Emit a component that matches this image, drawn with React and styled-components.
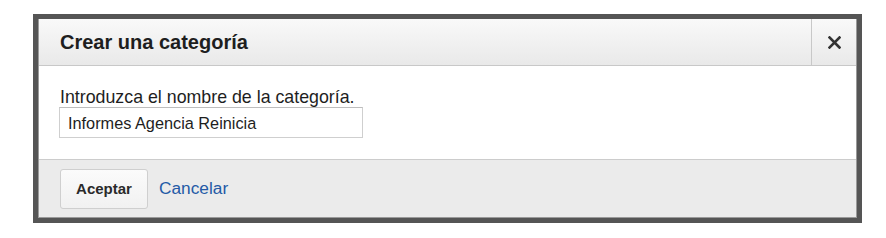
import React from "react";
import styled, { createGlobalStyle } from "styled-components";

const Global = createGlobalStyle`
  html, body { margin: 0; padding: 0; background: #ffffff; }
  body { font-family: "Liberation Sans", Arial, sans-serif; }
`;

const Page = styled.div`
  width: 886px;
  height: 238px;
  padding: 14px 24px 0 33px;
  box-sizing: border-box;
`;

const Dialog = styled.div`
  width: 829px;
  height: 209px;
  box-sizing: border-box;
  border: 5px solid #555555;
  box-shadow: inset 0 0 0 1px #9a9a9a;
  display: flex;
  flex-direction: column;
  background: #ffffff;
`;

const Header = styled.div`
  display: flex;
  height: 47px;
  box-sizing: border-box;
  border-bottom: 1px solid #c8c8c8;
  background: linear-gradient(#f9f9f9, #e9e9e9);
  margin: 0 1px;
`;

const Title = styled.h1`
  flex: 1;
  margin: 0;
  padding-left: 21px;
  display: flex;
  align-items: center;
  font-size: 20px;
  font-weight: bold;
  color: #1e1e1e;
`;

const CloseButton = styled.button`
  width: 45px;
  border: none;
  border-left: 1px solid #c8c8c8;
  background: transparent;
  display: flex;
  align-items: center;
  justify-content: center;
  padding: 0;
  cursor: pointer;
`;

const Body = styled.div`
  flex: 1;
  padding: 22px 22px 0;
  display: flex;
  flex-direction: column;
  align-items: flex-start;
`;

const Label = styled.label`
  font-size: 17.8px;
  color: #1e1e1e;
  line-height: 19px;
`;

const TextInput = styled.input`
  width: 304px;
  height: 31px;
  box-sizing: border-box;
  border: 1px solid #cfcfcf;
  border-top-color: #bdbdbd;
  padding: 1px 8px 0;
  margin-left: -1px;
  font-family: "Liberation Sans", Arial, sans-serif;
  font-size: 16.3px;
  color: #1e1e1e;
  outline: none;
`;

const Footer = styled.div`
  height: 58px;
  box-sizing: border-box;
  border-top: 1px solid #cccccc;
  background: #ebebeb;
  margin: 0 1px 1px;
  display: flex;
  align-items: center;
  padding-left: 21px;
  gap: 11px;
`;

const PrimaryButton = styled.button`
  height: 40px;
  width: 88px;
  box-sizing: border-box;
  border: 1px solid #cfcfcf;
  border-radius: 3px;
  background: linear-gradient(#fbfbfb, #f1f1f1);
  font-family: "Liberation Sans", Arial, sans-serif;
  font-size: 15px;
  font-weight: bold;
  color: #2a2a2a;
  padding: 0;
`;

const LinkButton = styled.a`
  font-size: 17.3px;
  color: #245aa6;
  text-decoration: none;
  cursor: pointer;
  margin-top: -1px;
`;

export default function App() {
  return (
    <>
      <Global />
      <Page>
        <Dialog>
          <Header>
            <Title>Crear una categoría</Title>
            <CloseButton aria-label="Cerrar">
              <svg width="13" height="13" viewBox="0 0 13 13">
                <path d="M1.5 1.5 L11.5 11.5 M11.5 1.5 L1.5 11.5" stroke="#333" strokeWidth="2.6" strokeLinecap="square" />
              </svg>
            </CloseButton>
          </Header>
          <Body>
            <Label>Introduzca el nombre de la categoría.</Label>
            <TextInput defaultValue="Informes Agencia Reinicia" />
          </Body>
          <Footer>
            <PrimaryButton>Aceptar</PrimaryButton>
            <LinkButton>Cancelar</LinkButton>
          </Footer>
        </Dialog>
      </Page>
    </>
  );
}
